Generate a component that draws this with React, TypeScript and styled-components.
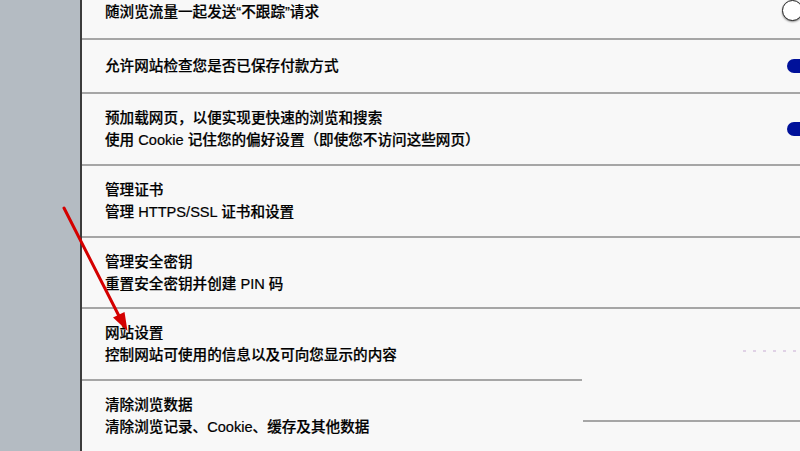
import React from "react";
import styled, { createGlobalStyle } from "styled-components";

const Global = createGlobalStyle`
  html, body { margin: 0; padding: 0; overflow: hidden; }
  body {
    width: 800px; height: 451px; background: #f8f8f8;
    font-family: "Liberation Sans", "Noto Sans CJK SC", sans-serif;
  }
`;

const Page = styled.div`
  position: relative;
  display: flex;
  width: 800px;
  height: 451px;
  overflow: hidden;
  background: #f8f8f8;
`;

const Sidebar = styled.div`
  flex: 0 0 80px;
  background: #b4bbc2;
  border-right: 2px solid #3c3c3c;
`;

const Content = styled.div`
  flex: 1;
  display: flex;
  flex-direction: column;
  margin-top: -14px;
`;

const Row = styled.div<{ $line?: "full" | "short" | "none" }>`
  display: flex;
  align-items: center;
  box-sizing: border-box;
  min-height: 54px;
  padding: 13px 0 13px 23px;
  position: relative;
  ${(p) =>
    p.$line === "short"
      ? `background-image: linear-gradient(#a6a6a6, #a6a6a6); background-size: 500px 2px; background-position: left bottom; background-repeat: no-repeat; padding-bottom: 15px;`
      : p.$line === "none"
      ? ``
      : `border-bottom: 2px solid #a6a6a6;`}
`;

const Texts = styled.div`
  flex: 1;
  display: flex;
  flex-direction: column;
`;

const Title = styled.div`
  font-size: 14.6px;
  line-height: 22px;
  color: #000;
  font-weight: 500;
  white-space: nowrap;
  -webkit-text-stroke: 0.2px #000;
`;

const Sub = styled(Title)``;

const ToggleOff = styled.div`
  position: absolute;
  right: -3px;
  top: 50%;
  margin-top: -12px;
  width: 19px;
  height: 19px;
  border-radius: 50%;
  background: #fff;
  border: 1.5px solid #222;
  box-shadow: 0 1px 2px rgba(0, 0, 0, 0.45);
`;

const ToggleOn = styled.div`
  position: absolute;
  right: -14px;
  top: 50%;
  margin-top: -7px;
  width: 27px;
  height: 14px;
  border-radius: 7px;
  background: #00119a;
`;

const Dashes = styled.div`
  position: absolute;
  right: 0;
  top: 50%;
  margin-top: 5px;
  width: 57px;
  height: 2px;
  background-image: linear-gradient(90deg, #e0d2e6 0 3px, transparent 3px 10px);
  background-size: 10px 2px;
`;

const TailLine = styled.div`
  position: absolute;
  right: 0;
  top: 39px;
  width: 217px;
  height: 2px;
  background: #a6a6a6;
`;

const Arrow = styled.svg`
  position: absolute;
  left: 0;
  top: 0;
  pointer-events: none;
`;

export default function App() {
  return (
    <>
      <Global />
      <Page>
        <Sidebar />
        <Content>
          <Row>
            <Texts>
              <Title>随浏览流量一起发送“不跟踪”请求</Title>
            </Texts>
            <ToggleOff />
          </Row>
          <Row>
            <Texts>
              <Title>允许网站检查您是否已保存付款方式</Title>
            </Texts>
            <ToggleOn />
          </Row>
          <Row>
            <Texts>
              <Title>预加载网页，以便实现更快速的浏览和搜索</Title>
              <Sub>使用 Cookie 记住您的偏好设置（即使您不访问这些网页）</Sub>
            </Texts>
            <ToggleOn />
          </Row>
          <Row>
            <Texts>
              <Title>管理证书</Title>
              <Sub>管理 HTTPS/SSL 证书和设置</Sub>
            </Texts>
          </Row>
          <Row>
            <Texts>
              <Title>管理安全密钥</Title>
              <Sub>重置安全密钥并创建 PIN 码</Sub>
            </Texts>
          </Row>
          <Row $line="short">
            <Texts>
              <Title>网站设置</Title>
              <Sub>控制网站可使用的信息以及可向您显示的内容</Sub>
            </Texts>
            <Dashes />
          </Row>
          <Row $line="none">
            <Texts>
              <Title>清除浏览数据</Title>
              <Sub>清除浏览记录、Cookie、缓存及其他数据</Sub>
            </Texts>
            <TailLine />
          </Row>
        </Content>
        <Arrow width="800" height="451" viewBox="0 0 800 451">
          <line x1="64" y1="208" x2="119" y2="316" stroke="#d40000" strokeWidth="3" strokeLinecap="round" />
          <polygon points="127.5,331 113,317.5 124.5,312" fill="#d40000" />
        </Arrow>
      </Page>
    </>
  );
}
